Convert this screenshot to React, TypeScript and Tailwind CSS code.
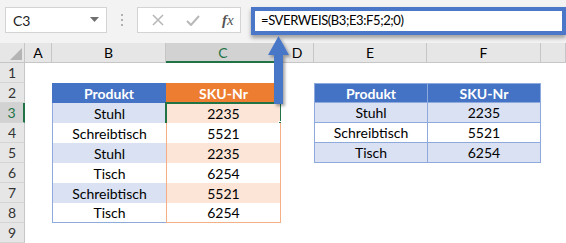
import React from "react";

const FONT = { fontFamily: "Lato, 'Liberation Sans', sans-serif" };

type Cell = { text?: string; cls?: string; bold?: boolean; sel?: boolean };

const colW = ["w-[27px]", "w-[114px]", "w-[115px]", "w-[33px]", "w-[113px]", "w-[114px]", "flex-1"];
const colNames = ["A", "B", "C", "D", "E", "F", ""];

const BL = "border-[#8ea9db]";
const OR = "border-[#f4b084]";

function rowCells(r: number): Cell[] {
  const empty: Cell[] = Array.from({ length: 7 }, () => ({}));
  const left: Record<number, [string, string]> = {
    3: ["Stuhl", "2235"],
    4: ["Schreibtisch", "5521"],
    5: ["Stuhl", "2235"],
    6: ["Tisch", "6254"],
    7: ["Schreibtisch", "5521"],
    8: ["Tisch", "6254"],
  };
  const right: Record<number, [string, string]> = {
    3: ["Stuhl", "2235"],
    4: ["Schreibtisch", "5521"],
    5: ["Tisch", "6254"],
  };
  if (r === 2) {
    empty[1] = { text: "Produkt", bold: true, cls: "bg-[#4472c4] text-white" };
    empty[2] = { text: "SKU-Nr", bold: true, cls: "bg-[#ed7d31] text-white" };
    empty[4] = { text: "Produkt", bold: true, cls: `bg-[#4472c4] text-white border-l border-t border-b ${BL}` };
    empty[5] = { text: "SKU-Nr", bold: true, cls: `bg-[#4472c4] text-white border-l border-r border-t border-b ${BL}` };
  }
  if (left[r]) {
    const band = r % 2 === 1;
    const last = r === 8;
    empty[1] = {
      text: left[r][0],
      cls: `${band ? "bg-[#d9e1f2]" : "bg-white"} border-l ${BL} ${last ? "border-b" : ""}`,
    };
    empty[2] = {
      text: left[r][1],
      cls: `${band ? "bg-[#fce4d6]" : "bg-white"} border-l border-r ${OR} ${last ? "border-b" : ""}`,
      sel: r === 3,
    };
  }
  if (right[r]) {
    const band = r % 2 === 1;
    empty[4] = { text: right[r][0], cls: `${band ? "bg-[#d9e1f2]" : "bg-white"} border-l border-b ${BL}` };
    empty[5] = { text: right[r][1], cls: `${band ? "bg-[#d9e1f2]" : "bg-white"} border-l border-r border-b ${BL}` };
  }
  return empty;
}

function Toolbar() {
  return (
    <div className="h-[43px] bg-[#f3f3f3] flex items-start pt-[7px] relative">
      <div className="ml-[5px] w-[102px] h-[26px] bg-white border border-[#d4d4d4] flex items-center justify-between pl-[7px] pr-[7px]">
        <span className="text-[14px] text-[#222]">C3</span>
        <svg width="9" height="6" viewBox="0 0 9 6">
          <path d="M0 0 L9 0 L4.5 5 Z" fill="#707070" />
        </svg>
      </div>
      <div className="w-[30px] h-[26px] flex flex-col items-center justify-center gap-[3px]">
        <div className="w-[2px] h-[2px] bg-[#b0b0b0]" />
        <div className="w-[2px] h-[2px] bg-[#b0b0b0]" />
        <div className="w-[2px] h-[2px] bg-[#b0b0b0]" />
      </div>
      <div className="w-[104px] h-[26px] bg-white border border-[#d4d4d4] flex items-center">
        <svg className="ml-[14px]" width="12" height="12" viewBox="0 0 12 12">
          <path d="M1 1 L11 11 M11 1 L1 11" stroke="#b8b8b8" strokeWidth="1.6" />
        </svg>
        <svg className="ml-[22px]" width="14" height="11" viewBox="0 0 14 11">
          <path d="M1 6 L5 10 L13 1" stroke="#b8b8b8" strokeWidth="2" fill="none" />
        </svg>
        <span
          className="ml-[22px] text-[15px] italic text-[#555]"
          style={{ fontFamily: "'Liberation Serif', serif" }}
        >
          <span className="font-bold">f</span>x
        </span>
      </div>
      <div className="ml-[10px] flex-1 h-[28px] bg-white border-[4px] border-[#4a77c8] shadow-[0_3px_4px_rgba(0,0,0,0.35)] flex items-center pl-[6px]">
        <span className="text-[13px] tracking-[-0.4px] text-black">=SVERWEIS(B3;E3:F5;2;0)</span>
      </div>
    </div>
  );
}

function HeaderRow() {
  return (
    <div className="flex h-[20px] bg-[#e6e6e6]">
      <div className="w-[25px] h-full border-r border-b border-[#c6c6c6] flex items-end justify-end p-[2px]">
        <svg width="12" height="12" viewBox="0 0 12 12">
          <path d="M12 0 L12 12 L0 12 Z" fill="#b4b4b4" />
        </svg>
      </div>
      {colNames.map((n, i) => (
        <div
          key={i}
          className={`${colW[i]} h-full flex items-center justify-center text-[14px] ${
            n === "C"
              ? "bg-[#d2d2d2] text-[#217346] border-r border-[#c6c6c6] border-b-2 border-b-[#217346]"
              : "text-black border-r border-b border-[#c6c6c6]"
          }`}
        >
          {n}
        </div>
      ))}
    </div>
  );
}

function Row({ r }: { r: number }) {
  const cells = rowCells(r);
  const selRow = r === 3;
  return (
    <div className="flex h-[20px]">
      <div
        className={`w-[25px] h-full flex items-center justify-center text-[14px] border-b border-[#d4d4d4] ${
          selRow
            ? "bg-[#d2d2d2] text-[#217346] border-r-2 border-r-[#217346]"
            : "bg-[#e6e6e6] text-[#333] border-r border-r-[#c6c6c6]"
        }`}
      >
        {r}
      </div>
      {cells.map((c, i) => (
        <div
          key={i}
          className={`${colW[i]} h-full relative flex items-center justify-center text-[14px] text-black ${c.cls ?? "bg-white"} ${
            c.bold ? "font-bold" : ""
          }`}
        >
          {c.text}
          {c.sel && (
            <>
              <div className="absolute -left-[2px] -top-[1px] -right-[2px] -bottom-[2px] border-2 border-[#217346]" />
              <div className="absolute -right-[4px] -bottom-[4px] w-[6px] h-[6px] bg-[#217346] border border-white" />
            </>
          )}
        </div>
      ))}
    </div>
  );
}

export default function App() {
  return (
    <div className="w-[566px] h-[243px] overflow-hidden relative bg-white" style={FONT}>
      <Toolbar />
      <HeaderRow />
      {[1, 2, 3, 4, 5, 6, 7, 8, 9].map((r) => (
        <Row key={r} r={r} />
      ))}
      <svg className="absolute left-0 top-0 pointer-events-none" width="566" height="243" viewBox="0 0 566 243">
        <defs>
          <filter id="sh" x="-50%" y="-50%" width="200%" height="200%">
            <feDropShadow dx="2" dy="2" stdDeviation="1.5" floodColor="#000" floodOpacity="0.35" />
          </filter>
        </defs>
        <path
          d="M278.5 36 L289 55 L283 55 L283 104 L274 104 L274 55 L268 55 Z"
          fill="#4a77c8"
          filter="url(#sh)"
        />
      </svg>
    </div>
  );
}
